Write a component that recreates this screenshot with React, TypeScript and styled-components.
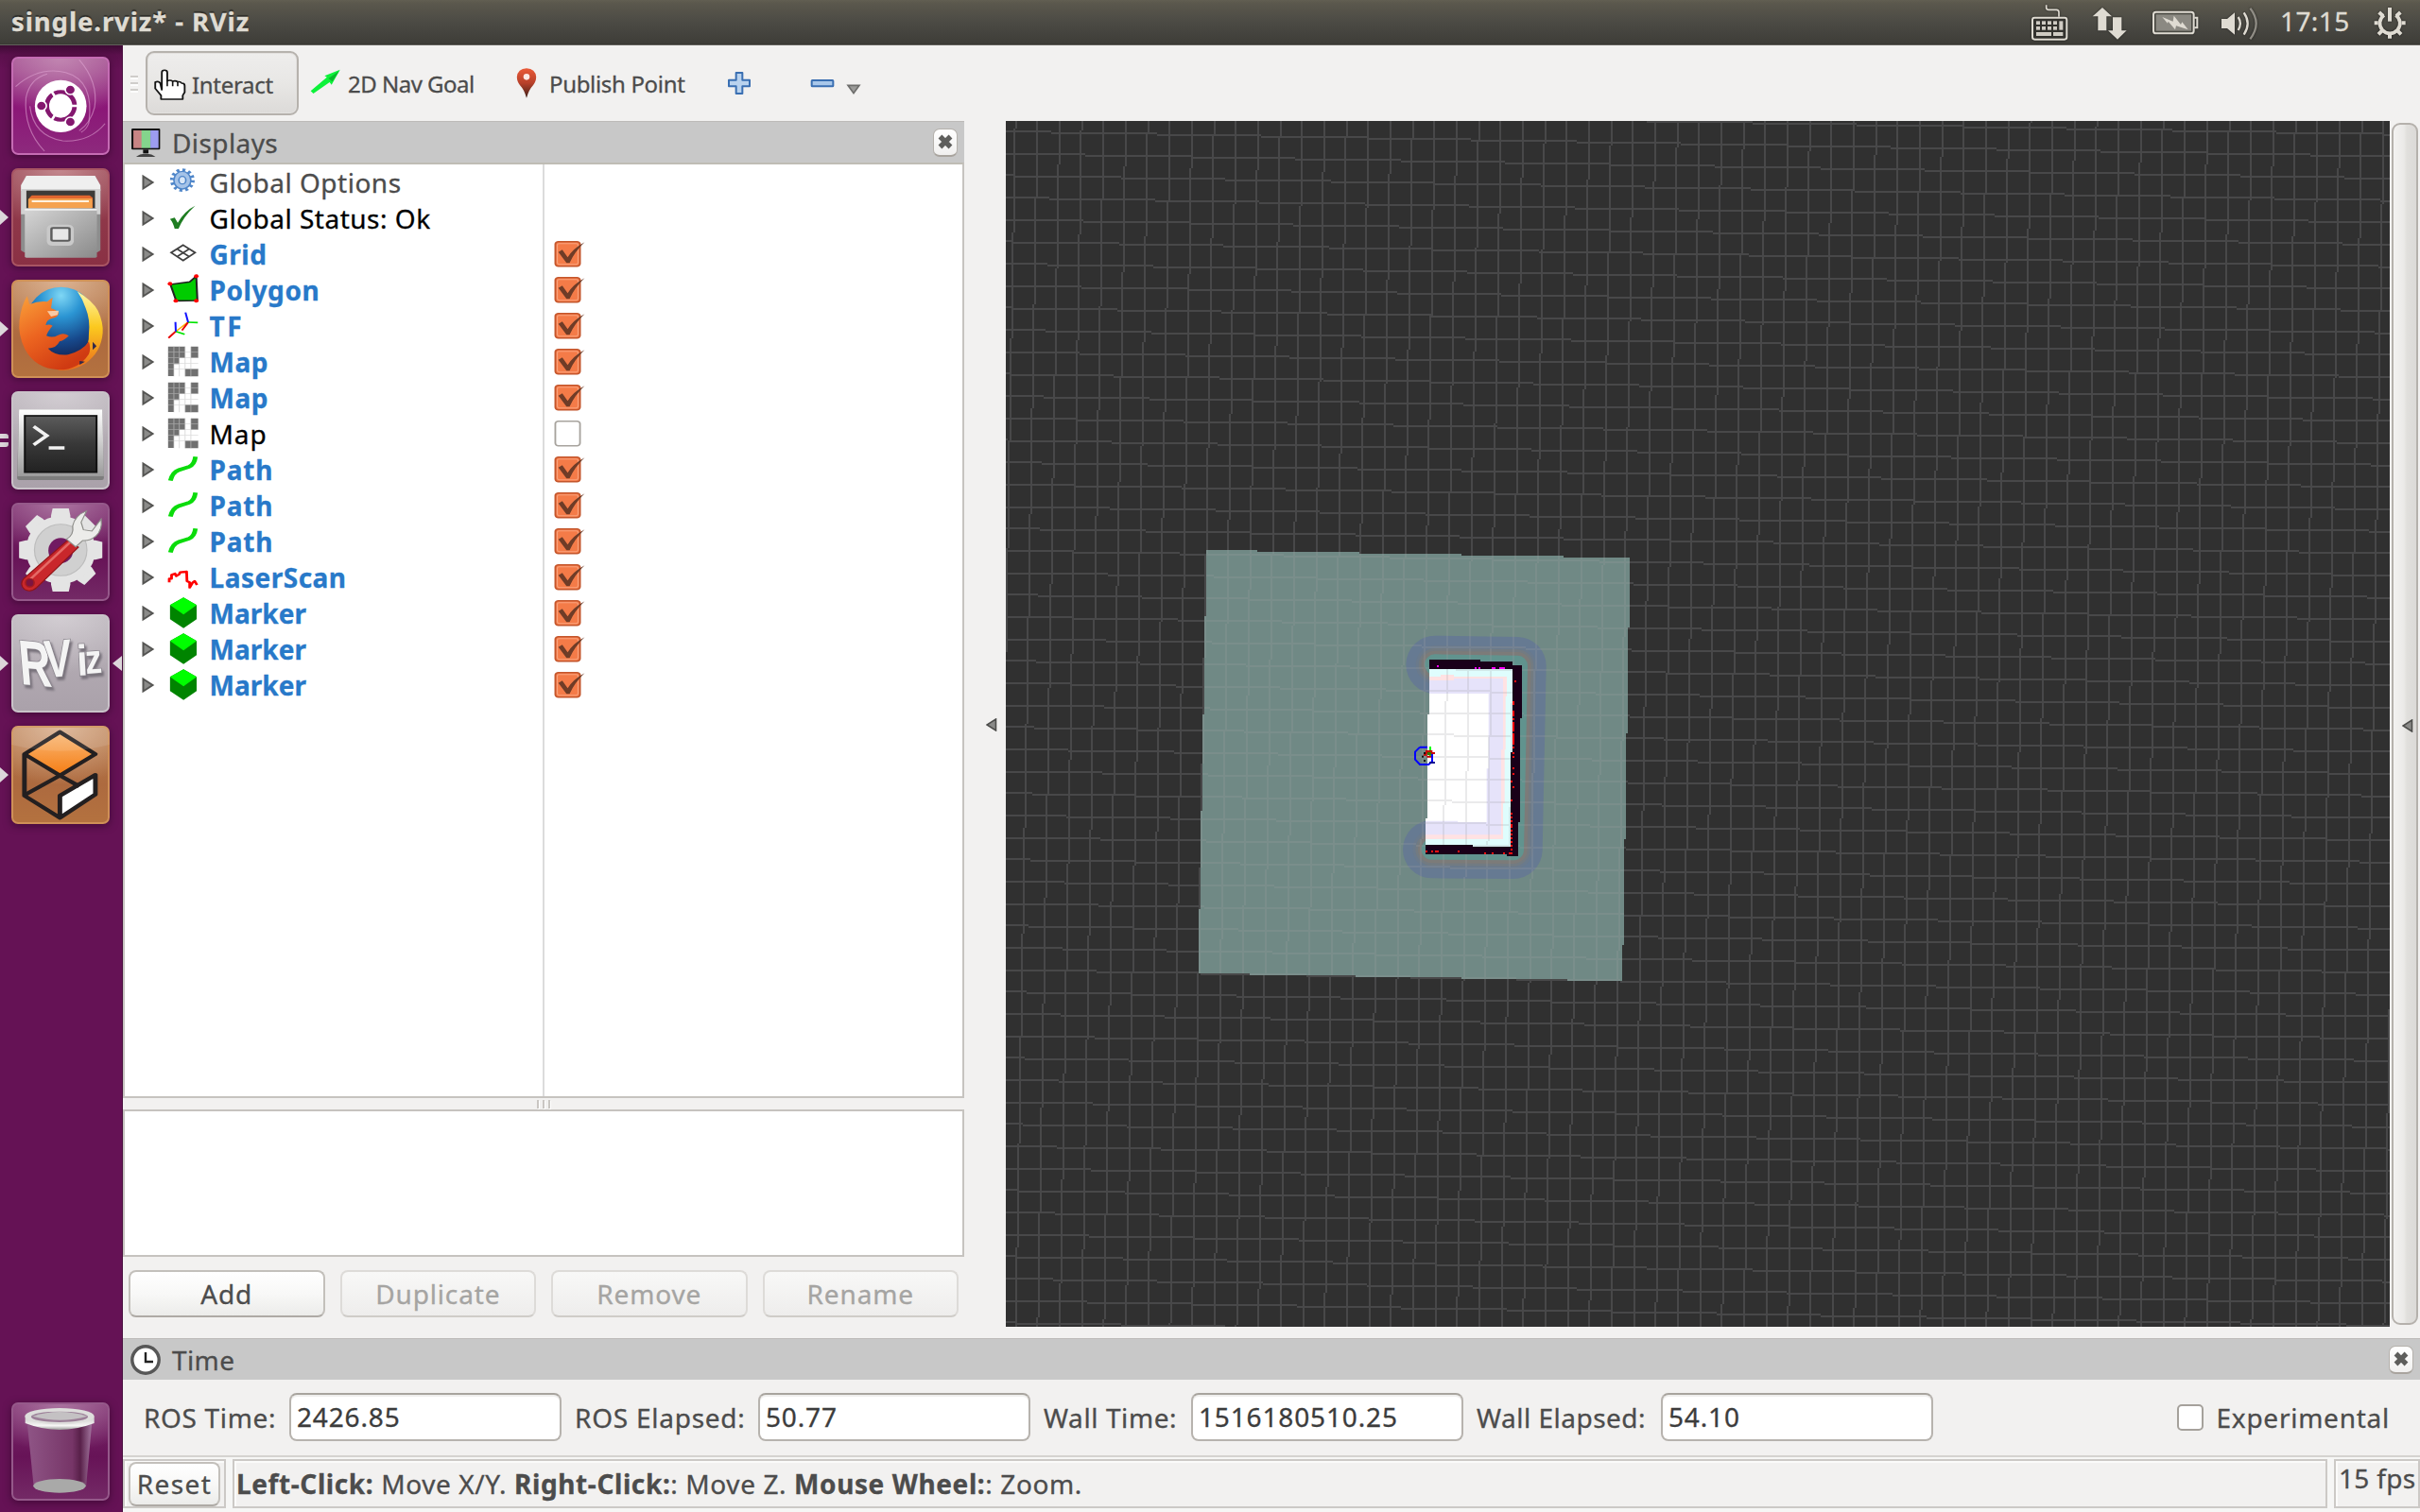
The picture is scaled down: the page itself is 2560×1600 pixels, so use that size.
import React from 'react';
import styled, { createGlobalStyle, css } from 'styled-components';

/* ------------------------------------------------------------------ */
/* Base                                                                */
/* ------------------------------------------------------------------ */

const GlobalStyle = createGlobalStyle`
  * { box-sizing: border-box; }
  html, body { margin: 0; padding: 0; overflow: hidden; }
  body {
    width: 2560px;
    height: 1600px;
    font-family: 'Noto Sans', 'Open Sans', sans-serif;
    font-size: 28px;
    color: #4c4c4c;
    background: #f2f1f0;
    -webkit-text-stroke: 0.3px;
  }
  svg { display: block; flex: none; }
`;

const Screen = styled.div`
  display: flex;
  flex-direction: column;
  width: 2560px;
  height: 1600px;
  overflow: hidden;
`;

const Body = styled.div`
  display: flex;
  flex: 1;
  min-height: 0;
`;

const Text = styled.span<{ $ls?: number }>`
  white-space: pre;
  letter-spacing: ${(p) => p.$ls ?? 0.6}px;
`;

const Spacer = styled.span<{ $w: number }>`
  flex: none;
  width: ${(p) => p.$w}px;
`;

/* ------------------------------------------------------------------ */
/* Top panel                                                           */
/* ------------------------------------------------------------------ */

const TopPanel = styled.header`
  display: flex;
  align-items: center;
  height: 48px;
  flex: none;
  padding-left: 12px;
  background: linear-gradient(#625f52 0, #5b584d 3px, #4b4a44 24px, #3e3d38 46px, #35342f 47px, #8f8d88 48px);
  color: #dfdbd2;
`;

const WindowTitle = styled.h1`
  margin: 0 auto 0 0;
  padding-bottom: 3px;
  font-size: 27.5px;
  font-weight: 700;
  line-height: 45px;
  letter-spacing: 0.9px;
  white-space: pre;
  text-shadow: 0 -2px 1px rgba(0, 0, 0, 0.45);
`;

const Indicators = styled.div`
  display: flex;
  align-items: center;
  height: 48px;
`;

const Clock = styled.span`
  width: 96px;
  padding-left: 20px;
  padding-bottom: 3px;
  line-height: 45px;
  letter-spacing: 0.4px;
`;

const IndicatorIcon = styled.svg`
  height: 48px;
  filter: drop-shadow(0 0 1px rgba(0, 0, 0, 0.6));
`;

const KeyboardIcon = () => (
  <IndicatorIcon width="40" viewBox="84 0 120 144">
    <path d="M134 16v8q0 7 8 7h24q8 0 8 8v14" fill="none" stroke="#dfdbd2" strokeWidth="5" />
    <rect x="90" y="56" width="109" height="69" rx="7" fill="#33322e" stroke="#dfdbd2" strokeWidth="6" />
    <g fill="#cfcbc3">
      {[102, 120, 138, 156].map((x) => (
        <React.Fragment key={x}>
          <rect x={x} y="67" width="12" height="11" />
          <rect x={x} y="84" width="12" height="11" />
        </React.Fragment>
      ))}
      <rect x="175" y="67" width="12" height="28" />
      <rect x="102" y="102" width="48" height="12" />
      <rect x="156" y="102" width="31" height="12" />
    </g>
  </IndicatorIcon>
);

const NetworkIcon = () => (
  <IndicatorIcon width="40" viewBox="277 0 120 144">
    <path fill="#dfdbd2" d="M313 24l30 28h-17v45h-27V52h-17zM346 55h28v42h16l-29 28-30-28h15z" />
  </IndicatorIcon>
);

const BatteryIcon = () => (
  <IndicatorIcon width="52" viewBox="470 0 156 144">
    <rect x="476" y="38" width="128" height="68" rx="8" fill="#4a4943" stroke="#dfdbd2" strokeWidth="6" />
    <rect x="484" y="46" width="112" height="52" fill="#8b8982" />
    <path d="M606 56h9v32h-9" fill="none" stroke="#dfdbd2" strokeWidth="6" />
    <path fill="#dfdbd2" d="M504 54l34 14 3-18 22 28 4-8 19 24-38-12-3 12-22-26-2 6z" />
  </IndicatorIcon>
);

const VolumeIcon = () => (
  <IndicatorIcon width="44" viewBox="684 0 132 144">
    <path fill="#dfdbd2" d="M690 60h18l24-20v70l-24-20h-18z" />
    <path d="M743 54q13 20 0 42" fill="none" stroke="#dfdbd2" strokeWidth="7" />
    <path d="M761 40q24 34 0 70" fill="none" stroke="#dfdbd2" strokeWidth="7" />
    <path d="M781 26q38 48 0 98" fill="none" stroke="#8f8c84" strokeWidth="7" />
  </IndicatorIcon>
);

const SessionIcon = () => (
  <IndicatorIcon width="40" viewBox="1164 0 120 144">
    <path d="M1206 48a32 32 0 1 0 37 0" fill="none" stroke="#dfdbd2" strokeWidth="11" />
    <path
      d="M1187 73h-12M1262 73h12M1224 110v12M1199 98l-11 11M1249 98l11 11M1203 51l-13-12M1245 51l13-12"
      stroke="#dfdbd2"
      strokeWidth="12"
    />
    <path d="M1224 24v44" stroke="#dfdbd2" strokeWidth="12" />
  </IndicatorIcon>
);

/* ------------------------------------------------------------------ */
/* Launcher                                                            */
/* ------------------------------------------------------------------ */

const Launcher = styled.nav`
  display: flex;
  flex-direction: column;
  gap: 14px;
  width: 130px;
  flex: none;
  padding: 12px 0;
  background: linear-gradient(#3d0a33 0, #5b104c 10px, #651255 26px);
  border-right: 1px solid #4a1040;
`;

type Tone = 'purple' | 'red' | 'tan' | 'grey' | 'clear';

const tones: Record<Tone, string> = {
  purple: 'radial-gradient(ellipse 90% 60% at 50% 0, #c287b2, transparent), linear-gradient(#a04a8d, #8b1677 50%, #8d2a7d)',
  red: 'radial-gradient(ellipse 90% 60% at 50% 0, #c4898f, transparent), linear-gradient(#94404f, #8a3044)',
  tan: 'radial-gradient(ellipse 90% 60% at 50% 0, #dcb393, transparent), linear-gradient(#b57a4d, #ad6a3f 60%, #b4723f)',
  grey: 'radial-gradient(ellipse 90% 60% at 50% 0, #d3ced3, transparent), linear-gradient(#b8b1b8, #aaa1aa)',
  clear: 'radial-gradient(ellipse 90% 50% at 50% 0, #ab74a0, transparent), linear-gradient(#7b2a6c, #671357 55%, #742a66)',
};

const outlines: Record<Tone, string> = {
  purple: '#c56cb4',
  red: '#a85563',
  tan: '#cf9057',
  grey: '#c9c3c9',
  clear: '#95598a',
};

const LauncherItem = styled.div<{ $last?: boolean }>`
  display: grid;
  grid-template-columns: 12px 104px 13px;
  align-items: center;
  height: 104px;
  ${(p) => p.$last && css`margin-top: auto;`}
`;

const Tile = styled.div<{ $tone: Tone }>`
  width: 104px;
  height: 104px;
  overflow: hidden;
  border-radius: 7px;
  background: ${(p) => tones[p.$tone]};
  box-shadow: inset 0 0 0 2px ${(p) => outlines[p.$tone]}, 0 2px 8px rgba(30, 0, 25, 0.5);
`;

const Pip = styled.span<{ $kind?: 'one' | 'two' | 'active' }>`
  height: 16px;
  ${(p) =>
    p.$kind === 'one' &&
    css`
      width: 9px;
      background: #dcd6da;
      clip-path: polygon(0 0, 100% 50%, 0 100%);
    `}
  ${(p) =>
    p.$kind === 'two' &&
    css`
      width: 9px;
      height: 14px;
      border: solid #dcd6da;
      border-width: 5px 0;
      border-radius: 0 3px 3px 0;
    `}
  ${(p) =>
    p.$kind === 'active' &&
    css`
      width: 10px;
      margin-left: 3px;
      background: #dcd6da;
      clip-path: polygon(100% 0, 0 50%, 100% 100%);
    `}
`;

/* Tile art uses a 255 x 312 canvas stretched onto the square tile. */
const TileArt = ({ top, children }: { top: number; children: React.ReactNode }) => (
  <svg width="104" height="104" viewBox={`29 ${top} 255 312`} preserveAspectRatio="none">
    {children}
  </svg>
);

const DashArt = () => (
  <TileArt top={180}>
    <g fill="none" stroke="#e2a8d6" strokeOpacity=".55" strokeWidth="3">
      <path d="M40 275q60-65 130-45q75 25 60 160q-5 20-20 30" />
      <path d="M205 190q50 70 40 150q-10 50-40 75" />
      <path d="M115 480q-55-70-48-170q10-60 55-75" />
      <path d="M272 392q-40 60-110 55q-75-15-85-110" />
    </g>
    <ellipse cx="157" cy="337" rx="67" ry="83" fill="#fff" />
    <ellipse cx="157" cy="336" rx="36" ry="44" fill="none" stroke="#84186f" strokeWidth="12" />
    <g stroke="#fff" strokeWidth="7">
      <path d="M157 336l62 0M157 336l-32-62M157 336l-32 62" />
    </g>
    <ellipse cx="157" cy="336" rx="27" ry="34" fill="#fff" />
    <g fill="#84186f" stroke="#fff" strokeWidth="4">
      <ellipse cx="107" cy="336" rx="13" ry="15" />
      <ellipse cx="182" cy="285" rx="13" ry="15" />
      <ellipse cx="182" cy="387" rx="13" ry="15" />
    </g>
  </TileArt>
);

const FilesArt = () => (
  <TileArt top={534}>
    <defs>
      <linearGradient id="cab" x1="0" y1="0" x2="1" y2="1">
        <stop offset="0" stopColor="#d6d6d6" />
        <stop offset="1" stopColor="#8a8a8a" />
      </linearGradient>
    </defs>
    <path d="M54 590l14-32h178l14 32v205l-8 6H62l-8-6z" fill="#8d8d8d" />
    <path d="M54 588l14-30h178l14 30v18H54z" fill="#efefef" />
    <path d="M54 600h206v80H54z" fill="#d2d2d2" />
    <rect x="68" y="605" width="178" height="60" fill="#3e3b38" />
    <path d="M76 628l6-8h150l8 8v32H76z" fill="#e0662e" />
    <rect x="73" y="630" width="166" height="32" rx="3" fill="#f5a24f" />
    <rect x="82" y="636" width="148" height="6" fill="#fff2df" />
    <rect x="64" y="661" width="187" height="157" rx="4" fill="url(#cab)" />
    <path d="M64 663h187v5H64z" fill="#efefef" />
    <rect x="121" y="713" width="70" height="67" rx="14" fill="#c9c9c9" />
    <rect x="133" y="724" width="47" height="40" rx="4" fill="#e8e8e8" stroke="#5c5c5c" strokeWidth="6" />
  </TileArt>
);

const FirefoxArt = () => (
  <TileArt top={888}>
    <defs>
      <radialGradient id="globe" cx=".5" cy=".12" r=".85">
        <stop offset="0" stopColor="#7fd7f5" />
        <stop offset=".35" stopColor="#2b95d3" />
        <stop offset=".75" stopColor="#17498c" />
        <stop offset="1" stopColor="#132a5e" />
      </radialGradient>
      <linearGradient id="fox" x1="0" y1="0" x2=".6" y2="1">
        <stop offset="0" stopColor="#f9a13a" />
        <stop offset=".5" stopColor="#ec6420" />
        <stop offset="1" stopColor="#cf3a12" />
      </linearGradient>
      <linearGradient id="tail" x1="0" y1="0" x2="0" y2="1">
        <stop offset="0" stopColor="#fff6a8" />
        <stop offset=".45" stopColor="#fbc91f" />
        <stop offset="1" stopColor="#ea6a1c" />
      </linearGradient>
    </defs>
    <ellipse cx="158" cy="1025" rx="91" ry="114" fill="url(#globe)" />
    <path
      d="M200 925q40 30 54 62q14 38 12 70q-4 62-46 98q-36 26-70 20q32-34 60-54q22-22 20-62q4-44-8-80q-8-30-22-54z"
      fill="url(#tail)"
    />
    <path
      d="M70 940l6 26q26-12 46-8l14-14l-4 34q14 6 20 14q0 14-16 18q-16 4-18 22q10-4 18 2q-14 20-16 32q16 8 30-2q14-10 28 2q-10 14-24 18q-8 22-30 22q18 24 52 20q38-12 54-42q6 24 0 40q-26 50-78 50q-62-4-88-66q-18-44-14-90q4-46 20-78z"
      fill="url(#fox)"
    />
    <path d="M122 988l30-2-3 14-17 5z" fill="#f7c9a4" />
    <path d="M240 1085l10 14-10 12zM206 1146l14 2-14 10z" fill="#30284a" />
  </TileArt>
);

const TerminalArt = () => (
  <TileArt top={42}>
    <defs>
      <linearGradient id="term" x1="0" y1="0" x2="0" y2="1">
        <stop offset="0" stopColor="#5c5c5c" />
        <stop offset=".5" stopColor="#383838" />
        <stop offset="1" stopColor="#222" />
      </linearGradient>
      <linearGradient id="termEdge" x1="0" y1="0" x2="0" y2="1">
        <stop offset="0" stopColor="#fff" />
        <stop offset="1" stopColor="#9b9b9b" />
      </linearGradient>
    </defs>
    <path d="M49 100h216l4 218q0 6-6 6H50q-6 0-6-6z" fill="#7d7d7d" />
    <path d="M49 100h216l4 212H45z" fill="url(#termEdge)" />
    <rect x="64" y="120" width="186" height="179" fill="url(#term)" stroke="#111" strokeWidth="5" />
    <path d="M87 154l34 29-34 29" fill="none" stroke="#f2f2f2" strokeWidth="10" />
    <path d="M126 222h41" stroke="#f2f2f2" strokeWidth="11" />
  </TileArt>
);

const SettingsArt = () => (
  <TileArt top={396}>
    <g fill="#e4e4e4">
      {[0, 45, 90, 135].map((a) => (
        <g key={a} transform={`translate(157 546) scale(1 1.22) rotate(${a})`}>
          <path d="M-25-90l4-18h42l4 18v180l-4 18h-42l-4-18z" />
        </g>
      ))}
      <ellipse cx="157" cy="546" rx="90" ry="108" />
    </g>
    <ellipse cx="157" cy="546" rx="68" ry="82" fill="#d0d0d0" stroke="#bdbdbd" strokeWidth="3" />
    <ellipse cx="157" cy="548" rx="32" ry="40" fill="#711b62" />
    <path d="M175 515l28 22-108 128q-16 18-32 6q-14-16-2-34z" fill="#c9272b" stroke="#8f1418" strokeWidth="3" />
    <path d="M183 520L72 646" stroke="#e56a66" strokeWidth="7" />
    <path
      d="M172 512q20-14 16-42q6-34 36-48l-14 36l6 24l22 4l24-38q4 34-14 54q-16 16-34 14l-18 20z"
      fill="#ececea"
      stroke="#8e8e8a"
      strokeWidth="3"
    />
    <ellipse cx="77" cy="650" rx="11" ry="13" fill="#7d1440" stroke="#a01c20" strokeWidth="4" />
  </TileArt>
);

const LogoText = styled.text`
  font-family: 'Liberation Sans', Arial, sans-serif;
  font-weight: 700;
  fill: #f4f4f4;
  stroke: #87828a;
  stroke-width: 1.6px;
  paint-order: stroke;
`;

const RvizArt = () => (
  <svg width="104" height="104" viewBox="0 0 104 104">
    <g filter="drop-shadow(2px 3px 1px #77717a)">
      <LogoText transform="translate(10 74) skewY(5) skewX(5) scale(.7 1)" fontSize="67">R</LogoText>
      <LogoText transform="translate(36 67) rotate(-4) scale(.78 1)" fontSize="56">V</LogoText>
      <LogoText transform="translate(70 65) rotate(-3) scale(.9 1)" fontSize="46">i</LogoText>
      <LogoText transform="translate(79 63) rotate(-4) scale(.8 1)" fontSize="44">z</LogoText>
    </g>
  </svg>
);

const GazeboArt = () => (
  <TileArt top={1104}>
    <defs>
      <linearGradient id="gz" x1="0" y1="0" x2="0" y2="1">
        <stop offset="0" stopColor="#f9b978" />
        <stop offset="1" stopColor="#f57c12" />
      </linearGradient>
    </defs>
    <path d="M155 1124l92 70-92 68-92-68z" fill="url(#gz)" />
    <path d="M156 1328l92-66v60l-92 74z" fill="#fff" />
    <g fill="none" stroke="#231f20" strokeWidth="12" strokeLinejoin="round">
      <path d="M155 1124l92 70-92 68-92-68zM63 1194v132l92 70v-70l92-66v62l-92 74" />
      <path d="M63 1324l92-62 50 34" />
    </g>
    <path d="M29 1104h255v60q-127 40-255 0z" fill="#fff" opacity=".1" />
  </TileArt>
);

const TrashArt = () => (
  <TileArt top={1032}>
    <defs>
      <linearGradient id="bin" x1="0" y1="0" x2="1" y2="0">
        <stop offset="0" stopColor="#8f5586" />
        <stop offset=".7" stopColor="#763567" />
        <stop offset=".82" stopColor="#582049" />
        <stop offset="1" stopColor="#a477a0" />
      </linearGradient>
      <linearGradient id="rim" x1="0" y1="0" x2="0" y2="1">
        <stop offset="0" stopColor="#c9c9c7" />
        <stop offset=".7" stopColor="#f6f6f5" />
        <stop offset="1" stopColor="#9a9a98" />
      </linearGradient>
    </defs>
    <path d="M70 1096l17 202q68 34 136 0l15-202z" fill="url(#bin)" />
    <ellipse cx="154" cy="1297" rx="68" ry="22" fill="#a9a9a8" />
    <path d="M65 1076v22q89 42 179 0v-22z" fill="url(#rim)" />
    <ellipse cx="154" cy="1076" rx="90" ry="26" fill="#dededc" />
    <ellipse cx="154" cy="1078" rx="74" ry="17" fill="#9c7f98" />
    <path d="M84 1076q70-28 142 0q-70 24-142 0z" fill="#c4c1c3" />
  </TileArt>
);

const launcherItems: { tone: Tone; art: React.FC; pip?: 'one' | 'two'; active?: boolean; last?: boolean }[] = [
  { tone: 'purple', art: DashArt },
  { tone: 'red', art: FilesArt, pip: 'one' },
  { tone: 'tan', art: FirefoxArt, pip: 'one' },
  { tone: 'grey', art: TerminalArt, pip: 'two' },
  { tone: 'clear', art: SettingsArt },
  { tone: 'grey', art: RvizArt, pip: 'one', active: true },
  { tone: 'tan', art: GazeboArt, pip: 'one' },
  { tone: 'clear', art: TrashArt, last: true },
];

/* ------------------------------------------------------------------ */
/* Toolbar                                                             */
/* ------------------------------------------------------------------ */

const Main = styled.main`
  display: flex;
  flex-direction: column;
  flex: 1;
  min-width: 0;
  background: #f2f1f0;
`;

const ToolBar = styled.div`
  display: flex;
  align-items: center;
  height: 80px;
  flex: none;
  padding-left: 8px;
  font-size: 24px;
`;

const Grip = styled.span`
  width: 8px;
  height: 18px;
  margin-right: 8px;
  margin-top: 2px;
  background: repeating-linear-gradient(#cfcdca 0 2px, #fdfdfd 2px 4px, transparent 4px 7px);
`;

const ToolButton = styled.div<{ $width: number; $active?: boolean }>`
  display: flex;
  align-items: center;
  width: ${(p) => p.$width}px;
  height: 68px;
  ${(p) =>
    p.$active &&
    css`
      padding: 3px 0 0 7px;
      border: 2px solid #b6b2ad;
      border-radius: 9px;
      background: linear-gradient(#eeedec, #e8e7e5 50%, #dcdad8);
      box-shadow: inset 0 0 0 1px #e3e1df;
    `}
`;

const HandIcon = () => (
  <svg width="34" height="34" viewBox="399 220 83 102" preserveAspectRatio="none">
    <path
      d="M419 286V231q0-7 7-7t7 7v27q8-4 14 1q8-3 13 2q7-2 10 4q8 0 8 8v21l-5 10v12h-56v-12l-15-22v-20q8-5 13 3z"
      fill="#fff"
      stroke="#151515"
      strokeWidth="4.6"
      strokeLinejoin="round"
    />
    <path d="M433 256v19M447 259v16M460 262v13" stroke="#151515" strokeWidth="4" />
  </svg>
);

const NavGoalIcon = () => (
  <svg width="36" height="30" viewBox="802 222 88 90" preserveAspectRatio="none">
    <path d="M806 292l42-44-6-4 40-20-22 48-5-8-42 36z" fill="#0df23a" />
    <path d="M852 252l10 10 18-34z" fill="#0ab92c" />
  </svg>
);

const PinIcon = () => (
  <svg width="22" height="32" viewBox="1340 215 54 96" preserveAspectRatio="none">
    <defs>
      <linearGradient id="pin" x1="0" y1="0" x2="0" y2="1">
        <stop offset="0" stopColor="#ea5a38" />
        <stop offset=".5" stopColor="#b7402a" />
        <stop offset="1" stopColor="#3d1f18" />
      </linearGradient>
    </defs>
    <path d="M1367 310q-6-26-17-40q-8-12-8-27q2-25 25-27q23 2 25 27q0 15-8 27q-11 14-17 40z" fill="url(#pin)" />
    <ellipse cx="1367" cy="243" rx="8" ry="10" fill="#fbe9e4" />
  </svg>
);

const PlusIcon = () => (
  <svg width="26" height="26" viewBox="387 225 78 78">
    <path
      d="M416 231h20v23h23v20h-23v23h-20v-23h-23v-20h23z"
      fill="#b9d2ee"
      stroke="#3a6fb2"
      strokeWidth="6"
      strokeLinejoin="round"
    />
  </svg>
);

const MinusIcon = () => (
  <svg width="26" height="26" viewBox="651 225 78 78">
    <rect x="656" y="255" width="68" height="19" rx="2" fill="#a9c7ea" stroke="#3a6fb2" strokeWidth="6" />
  </svg>
);

const DropIcon = () => (
  <svg width="16" height="26" viewBox="765 225 48 78">
    <path d="M771 271h36l-18 25z" fill="#9b9b99" stroke="#6e6e6c" strokeWidth="5" />
  </svg>
);

/* ------------------------------------------------------------------ */
/* Panels                                                              */
/* ------------------------------------------------------------------ */

const PanelHeader = styled.div`
  display: flex;
  align-items: center;
  height: 44px;
  flex: none;
  padding: 0 7px;
  background: #c8c8c8;
  border-top: 1px solid #bcbab8;
`;

const PanelTitle = styled.h2`
  margin: 0 auto 0 11px;
  font-size: 28px;
  font-weight: 400;
  line-height: 42px;
  letter-spacing: 0.4px;
`;

const CloseBox = styled.button`
  display: grid;
  place-items: center;
  width: 26px;
  height: 30px;
  padding: 0;
  border: 1px solid #b5b1ac;
  border-bottom: 2px solid #a9a49e;
  border-radius: 7px;
  background: linear-gradient(#fff, #f1f0ef);
`;

const CloseButton = () => (
  <CloseBox aria-label="Close">
    <svg width="16" height="16" viewBox="0 0 16 16">
      <path d="M2.5 2.5l11 11M13.5 2.5l-11 11" stroke="#5e5e5c" strokeWidth="5.4" />
    </svg>
  </CloseBox>
);

const MonitorIcon = () => (
  <svg width="34" height="34" viewBox="335 404 83 102" preserveAspectRatio="none">
    <rect x="340" y="410" width="74" height="67" rx="3" fill="#111" />
    <rect x="345" y="416" width="22" height="56" fill="#c88484" />
    <rect x="366" y="416" width="24" height="56" fill="#84d48c" />
    <rect x="389" y="416" width="21" height="56" fill="#9c9cf0" />
    <path d="M370 477h14v12h-14z" fill="#111" />
    <path d="M352 500q8-10 25-10t25 10z" fill="#444" />
  </svg>
);

const ClockIcon = () => (
  <svg width="34" height="34" viewBox="0 0 34 34">
    <circle cx="17" cy="17" r="14.2" fill="#fff" stroke="#575757" strokeWidth="3.4" />
    <path d="M17 9v10h8" fill="none" stroke="#222" strokeWidth="2.4" />
  </svg>
);

const Workspace = styled.section`
  display: flex;
  height: 1288px;
  flex: none;
`;

const DisplaysPanel = styled.aside`
  display: flex;
  flex-direction: column;
  width: 890px;
  flex: none;
`;

const Tree = styled.ul`
  display: flex;
  flex-direction: column;
  height: 990px;
  flex: none;
  margin: 0;
  padding: 0;
  list-style: none;
  border: 2px solid #c6c3bf;
  border-top-color: #bfbcb4;
  background: linear-gradient(90deg, #fff 442px, #dcdcdc 442px 444px, #fff 444px);
`;

const TreeRow = styled.li`
  display: grid;
  grid-template-columns: 27px 44.5px 363px 34px;
  align-items: center;
  height: 38px;
  flex: none;
  padding-left: 18px;
`;

const RowName = styled.span<{ $state: 'muted' | 'plain' | 'on'; $ls?: number }>`
  color: ${(p) => (p.$state === 'on' ? '#2879c9' : p.$state === 'plain' ? '#000' : '#4c4c4c')};
  font-weight: ${(p) => (p.$state === 'on' ? 700 : 400)};
  line-height: 38px;
  letter-spacing: ${(p) => p.$ls ?? 0.5}px;
  white-space: pre;
`;

const ExpandIcon = () => (
  <svg width="14" height="18" viewBox="0 0 14 18">
    <path d="M1.5 2.5l10 6.5-10 6.5z" fill="#8b8b89" stroke="#555553" strokeWidth="2" />
  </svg>
);

const RowIcon = ({ cy, children }: { cy: number; children: React.ReactNode }) => (
  <svg width="34" height="34" viewBox={`434 ${cy - 51} 83.3 102`} preserveAspectRatio="none">
    {children}
  </svg>
);

const OptionsIcon = () => (
  <RowIcon cy={580}>
    <ellipse cx="473" cy="573" rx="27" ry="32" fill="none" stroke="#4f86c9" strokeWidth="10" strokeDasharray="7.5 7.9" />
    <ellipse cx="473" cy="573" rx="22" ry="28" fill="#a5c3e8" stroke="#4f86c9" strokeWidth="4" />
    <ellipse cx="473" cy="573" rx="9" ry="12" fill="#dbe8f7" stroke="#4f86c9" strokeWidth="4" />
  </RowIcon>
);

const OkIcon = () => (
  <RowIcon cy={691}>
    <path d="M441 693l12-4 8 16q18-38 45-54q-30 34-43 73h-10q-4-20-12-31z" fill="#1f7d22" />
  </RowIcon>
);

const GridIcon = () => (
  <RowIcon cy={806}>
    <path
      d="M475 777l31 24-31 25-31-25zM459 789l32 25M491 789l-32 25"
      fill="none"
      stroke="#3f3f3f"
      strokeWidth="5"
    />
  </RowIcon>
);

const PolygonIcon = () => (
  <RowIcon cy={920}>
    <path d="M442 902l50-8 17-18 3 77-55 1z" fill="#0c0" stroke="#222" strokeWidth="5" />
    <g fill="#f00">
      <ellipse cx="441" cy="900" rx="6" ry="6" />
      <ellipse cx="509" cy="876" rx="6" ry="6" />
      <ellipse cx="509" cy="954" rx="6" ry="6" />
      <ellipse cx="456" cy="954" rx="6" ry="6" />
    </g>
  </RowIcon>
);

const TfIcon = () => (
  <RowIcon cy={1034}>
    <path d="M456 1051l32-30" stroke="#ffb000" strokeWidth="4" />
    <path d="M456 1051l-19 21M488 1022l-16 26" stroke="#e80000" strokeWidth="5" />
    <path d="M456 1051l23 9M488 1022l25 1" stroke="#00e400" strokeWidth="5" />
    <path d="M456 1051l-1-30M488 1022l-7-31" stroke="#1414ff" strokeWidth="5" />
  </RowIcon>
);

const MapIcon = () => (
  <RowIcon cy={1148}>
    <path d="M436 1099h44v36h-15v20h-14v38h-15zM495 1099h19v36h-19zM480 1170h34v24h-34z" fill="#707070" />
    <path
      d="M451 1099v95M465 1099v95M480 1099v95M495 1099v95M436 1117h78M436 1135h78M436 1153h78M436 1171h78"
      stroke="#c6c6c6"
      strokeOpacity=".6"
      strokeWidth="2.5"
    />
  </RowIcon>
);

const PathIcon = () => (
  <RowIcon cy={290}>
    <path d="M442 325q6-28 22-34t26-10q14-6 17-32" fill="none" stroke="#0bdc0b" strokeWidth="12" />
  </RowIcon>
);

const LaserIcon = () => (
  <RowIcon cy={632}>
    <path
      d="M439 648v-12h6v-12l9-4 3 8 8-6 2-6 17-2 1 30 7 4v16l8-16 5-4 6 12"
      fill="none"
      stroke="#f00"
      strokeWidth="7"
      strokeLinejoin="round"
    />
  </RowIcon>
);

const MarkerIcon = () => (
  <RowIcon cy={746}>
    <path d="M441 720l35-24 34 24v45l-34 28-35-28z" fill="#008400" />
    <path d="M441 720l35-24 34 24-34 30z" fill="#0f0" />
  </RowIcon>
);

const TreeCheck = ({ checked }: { checked: boolean }) => (
  <svg width="34" height="34" viewBox="1432 754 83.3 102" preserveAspectRatio="none">
    <rect
      x="1438"
      y="765"
      width="64"
      height="78"
      rx="8"
      fill={checked ? '#f47b48' : '#fff'}
      stroke={checked ? '#c4562c' : '#a7a39d'}
      strokeWidth="4.5"
    />
    {checked && (
      <>
        <rect x="1443" y="771" width="54" height="66" rx="5" fill="none" stroke="#f9a27c" strokeWidth="3" />
        <path d="M1446 798l10-7 14 24q14-28 44-48q-26 30-39 66h-8z" fill="#6f3c27" />
      </>
    )}
  </svg>
);

type RowSpec = { name: string; icon: React.FC; state: 'muted' | 'plain' | 'on'; check?: boolean; ls?: number };

const rows: RowSpec[] = [
  { name: 'Global Options', icon: OptionsIcon, state: 'muted' },
  { name: 'Global Status: Ok', icon: OkIcon, state: 'plain' },
  { name: 'Grid', icon: GridIcon, state: 'on', check: true },
  { name: 'Polygon', icon: PolygonIcon, state: 'on', check: true, ls: 0.6 },
  { name: 'TF', icon: TfIcon, state: 'on', check: true, ls: 2.5 },
  { name: 'Map', icon: MapIcon, state: 'on', check: true },
  { name: 'Map', icon: MapIcon, state: 'on', check: true },
  { name: 'Map', icon: MapIcon, state: 'plain', check: false, ls: 0.9 },
  { name: 'Path', icon: PathIcon, state: 'on', check: true, ls: 0.8 },
  { name: 'Path', icon: PathIcon, state: 'on', check: true, ls: 0.8 },
  { name: 'Path', icon: PathIcon, state: 'on', check: true, ls: 0.8 },
  { name: 'LaserScan', icon: LaserIcon, state: 'on', check: true },
  { name: 'Marker', icon: MarkerIcon, state: 'on', check: true, ls: 0.05 },
  { name: 'Marker', icon: MarkerIcon, state: 'on', check: true, ls: 0.05 },
  { name: 'Marker', icon: MarkerIcon, state: 'on', check: true, ls: 0.05 },
];

const SplitHandle = styled.div`
  display: flex;
  justify-content: center;
  align-items: center;
  gap: 4px;
  height: 12px;
  flex: none;
`;

const SplitTick = styled.span`
  width: 2px;
  height: 9px;
  background: #c9c6c2;
  box-shadow: 1px 1px 0 #fff;
`;

const Description = styled.div`
  height: 156px;
  flex: none;
  border: 2px solid #c6c3bf;
  background: #fff;
`;

const ButtonRow = styled.div`
  display: flex;
  gap: 16px;
  padding: 14px 6px 0;
`;

const PushButton = styled.button`
  flex: 1;
  height: 50px;
  padding: 0;
  border: 2px solid #c3c0bb;
  border-bottom-color: #aeaaa5;
  border-radius: 8px;
  background: linear-gradient(#fff, #f8f8f7 50%, #ececea);
  font: inherit;
  line-height: 44px;
  color: #4c4c4c;
  letter-spacing: 0.85px;

  &:disabled {
    border-color: #dddbd8;
    border-bottom-color: #cfccc8;
    background: linear-gradient(#f8f8f7, #eeedec);
    color: #a5a4a2;
  }
`;

/* ------------------------------------------------------------------ */
/* 3D view                                                             */
/* ------------------------------------------------------------------ */

const Splitter = styled.div`
  display: flex;
  align-items: center;
  justify-content: center;
  width: 44px;
  flex: none;
  padding: 0 0 10px 14px;
`;

const RightDock = styled.div`
  display: flex;
  width: 32px;
  flex: none;
  padding: 2px 2px 14px 2px;
`;

const DockBar = styled.div`
  display: flex;
  align-items: center;
  justify-content: center;
  flex: 1;
  padding: 4px 0 0 5px;
  border: 2px solid #b5b1ac;
  border-radius: 9px;
  background: linear-gradient(90deg, #f3f2f1, #ebeae8 45%, #e0dfdc 60%, #dcdad8);
`;

const CollapseArrow = () => (
  <svg width="12" height="14" viewBox="0 0 12 14">
    <path d="M10.5 1v12L1 7z" fill="#8a8a88" stroke="#4d4d4b" strokeWidth="1.6" />
  </svg>
);

const SLOPE = 0.01802;
const PITCH = 23.346;
const VIEW = { left: 1064, top: 128, right: 2528, bottom: 1404 };

/* Ground grid: every line is slightly tilted and stepped on 2px cells. */
function gridPath(): string {
  const out: string[] = [];
  for (let k = -3; k < 58; k++) {
    const at = (x: number) => 140 + k * PITCH + SLOPE * (x - 1111.7);
    let start = VIEW.left;
    let y = Math.floor(at(start) / 2) * 2 + 1;
    for (let x = VIEW.left; x <= VIEW.right; x += 2) {
      const ny = Math.floor(at(x) / 2) * 2 + 1;
      if (ny !== y || x === VIEW.right) {
        if (y > VIEW.top && y < VIEW.bottom) out.push(`M${start} ${y}H${x}`);
        start = x;
        y = ny;
      }
    }
  }
  for (let k = -1; k < 66; k++) {
    const at = (y: number) => 1073.8 + k * PITCH - SLOPE * (y - 145.7);
    let start = VIEW.top;
    let x = Math.floor(at(start) / 2) * 2 + 1;
    for (let y = VIEW.top; y <= VIEW.bottom; y += 2) {
      const nx = Math.floor(at(y) / 2) * 2 + 1;
      if (nx !== x || y === VIEW.bottom) {
        if (x > VIEW.left && x < VIEW.right) out.push(`M${x} ${start}V${y}`);
        start = y;
        x = nx;
      }
    }
  }
  return out.join('');
}

const CELL = 6;

/* Turns a polygon into a staircase outline on the map's cells. */
function cells(points: [number, number][]): string {
  const snap = (v: number) => Math.round(v / CELL) * CELL;
  let d = '';
  points.forEach(([ax, ay], i) => {
    const [bx, by] = points[(i + 1) % points.length];
    const n = Math.max(1, Math.round(Math.max(Math.abs(bx - ax), Math.abs(by - ay)) / CELL));
    for (let j = 0; j < n; j++) {
      const x = snap(ax + ((bx - ax) * j) / n);
      const y = snap(ay + ((by - ay) * j) / n);
      d += d ? `H${x}V${y}` : `M${x} ${y}`;
    }
  });
  return d + 'Z';
}

const wallLine = 'M834 430L1095 434L1083 1018L824 1016';

const inflation: [number, string][] = [
  [184, '#667a92'],
  [122, '#6a7a8c'],
  [104, '#727b82'],
  [88, '#7c7b79'],
  [66, '#61938e'],
];

const redCells: [number, number][] = [
  [1089, 483], [1083, 549], [1083, 555], [1083, 603], [1083, 693], [1083, 711], [1083, 723], [1083, 759], [1083, 777],
  [1077, 801], [1083, 819], [1077, 861], [1077, 903], [1077, 915], [1077, 927], [1077, 939], [1077, 945], [1077, 957],
  [1077, 969], [1077, 981], [1077, 993], [1077, 1005], [1077, 1017], [1077, 1029], [807, 1023], [825, 1023], [837, 1023],
  [843, 1023], [909, 1023], [993, 1029], [1017, 1029], [1053, 1029], [1071, 1029],
];

const magentaCells: [number, number][] = [
  [843, 435], [963, 441], [975, 441], [1017, 441], [1023, 441], [1041, 441], [1047, 441], [1053, 441],
];

const Dots = ({ at, fill }: { at: [number, number][]; fill: string }) => (
  <g fill={fill}>
    {at.map(([x, y]) => (
      <rect key={`${x}-${y}`} x={x - 3} y={y - 3} width="6" height="6" />
    ))}
  </g>
);

const Scene = styled.svg`
  background: #303030;
`;

const RenderView = () => (
  <Scene width="1464" height="1276" viewBox="1064 128 1464 1276">
    <g transform="translate(1240 560) scale(.333333)">
      <path d={cells([[109, 66], [1453, 91], [1429, 1434], [83, 1410]])} fill="#708985" />
      <g fill="none" strokeLinejoin="round" strokeLinecap="round">
        {inflation.map(([w, c]) => (
          <path key={w} d={wallLine} stroke={c} strokeWidth={w} />
        ))}
      </g>
      <path d="M816 444H1080V708H1074V1008H804V918H810V588H816Z" fill="#dffdfd" />
      <path d="M816 468H852V462H894V468H1062V530H1058V700H1055V870H1050V984H804V918H810V588H816Z" fill="#ffe2e3" />
      <path d="M816 480H894V474H1050V700H1044V970H804V918H810V588H816Z" fill="#e6e3fa" />
      <path d="M816 522H1004V760H998V930H906V926H804V918H810V588H816Z" fill="#fff" />
    </g>
    <path d={gridPath()} fill="none" stroke="#a0a0a4" strokeOpacity=".22" strokeWidth="2" />
    <g transform="translate(1240 560) scale(.333333)">
      <path
        d="M816 414H978V420H1080V432H1110V600H1104V930H1098V1038H1062V1032H804V1002H954V1008H1074V708H1080V444H816Z"
        fill="#190019"
      />
      <rect x="1080" y="576" width="6" height="18" fill="#f00" />
      <rect x="1080" y="612" width="6" height="30" fill="#f00" />
      <rect x="1080" y="648" width="6" height="36" fill="#f00" />
      <Dots at={redCells} fill="#ff1010" />
      <Dots at={magentaCells} fill="#f0f" />
      <path
        d="M786 692H810M786 692L771 707V731L786 747H814L825 737V712"
        fill="none"
        stroke="#00f"
        strokeWidth="6"
      />
      <path d="M816 738h18v6h-18z" fill="#0a0a90" />
      <path d="M816 690h6v30h-6z" fill="#0f0" />
      <path d="M804 702h22v6h8v6h-10v-1h-16v12h14v-6h-24v-11h6z" fill="#c80000" />
      <path d="M810 708h12v9h-12z" fill="#2f7a00" />
      <Dots at={[[795, 722], [801, 711], [801, 735]]} fill="#111" />
    </g>
  </Scene>
);

/* ------------------------------------------------------------------ */
/* Time panel and status bar                                           */
/* ------------------------------------------------------------------ */

const TimeRow = styled.div`
  display: flex;
  align-items: center;
  gap: 14px;
  height: 80px;
  flex: none;
  padding: 0 32px 0 22px;
`;

const Field = styled.label`
  display: flex;
  align-items: center;
`;

const FieldLabel = styled.span<{ $w: number; $ls: number }>`
  width: ${(p) => p.$w}px;
  line-height: 50px;
  letter-spacing: ${(p) => p.$ls}px;
  white-space: pre;
`;

const FieldBox = styled.output`
  width: 288px;
  height: 51px;
  margin-top: -1px;
  padding-left: 6px;
  border: 2px solid #b7b3ae;
  border-top-color: #a8a49e;
  border-radius: 8px;
  background: #fff;
  box-shadow: inset 0 2px 1px #efeeed;
  line-height: 46px;
  color: #3c3c3c;
  letter-spacing: 0.85px;
`;

const Experimental = styled.label`
  display: flex;
  align-items: center;
  gap: 14px;
  margin-left: auto;
`;

const CheckBox = styled.span`
  width: 28px;
  height: 28px;
  border: 2px solid #a5a19b;
  border-radius: 5px;
  background: #fff;
`;

const StatusBar = styled.footer`
  display: flex;
  gap: 7px;
  height: 60px;
  flex: none;
  border-top: 2px solid #d5d3d0;
  padding: 2px 0 4px;
  background: #f6f6f5;
`;

const StatusCell = styled.div<{ $w?: number; $raised?: boolean }>`
  display: flex;
  align-items: center;
  ${(p) => (p.$w ? css`width: ${p.$w}px; flex: none;` : css`flex: 1;`)}
  height: 52px;
  padding: ${(p) => (p.$raised ? '0 0 13px 3px' : '0 0 0 2px')};
  border: 2px solid #ccc9c6;
  background: #f2f1f0;
  box-shadow: inset 2px 2px 0 #fbfbfa;
  line-height: 46px;
  white-space: pre;
  letter-spacing: ${(p) => (p.$raised ? 0.3 : 0.6)}px;
`;

const ResetCell = styled(StatusCell)`
  padding-left: 4px;
`;

const ResetButton = styled(PushButton)`
  flex: none;
  width: 97px;
  height: 47px;
  line-height: 42px;
  letter-spacing: 1.4px;
`;

/* ------------------------------------------------------------------ */

export default function App() {
  return (
    <Screen>
      <GlobalStyle />
      <TopPanel>
        <WindowTitle>single.rviz* - RViz</WindowTitle>
        <Indicators>
          <KeyboardIcon />
          <Spacer $w={24} />
          <NetworkIcon />
          <Spacer $w={24} />
          <BatteryIcon />
          <Spacer $w={20} />
          <VolumeIcon />
          <Clock>17:15</Clock>
          <Spacer $w={20} />
          <SessionIcon />
          <Spacer $w={12} />
        </Indicators>
      </TopPanel>

      <Body>
        <Launcher>
          {launcherItems.map(({ tone, art: Art, pip, active, last }, i) => (
            <LauncherItem key={i} $last={last}>
              <Pip $kind={pip} />
              <Tile $tone={tone}>
                <Art />
              </Tile>
              <Pip $kind={active ? 'active' : undefined} />
            </LauncherItem>
          ))}
        </Launcher>

        <Main>
          <ToolBar>
            <Grip />
            <ToolButton $width={162} $active>
              <HandIcon />
              <Spacer $w={6} />
              <Text $ls={-0.3}>Interact</Text>
            </ToolButton>
            <Spacer $w={11} />
            <ToolButton $width={219}>
              <NavGoalIcon />
              <Spacer $w={5} />
              <Text $ls={-0.5}>2D Nav Goal</Text>
            </ToolButton>
            <ToolButton $width={223}>
              <PinIcon />
              <Spacer $w={13} />
              <Text $ls={-0.33}>Publish Point</Text>
            </ToolButton>
            <PlusIcon />
            <Spacer $w={62} />
            <MinusIcon />
            <Spacer $w={12} />
            <DropIcon />
          </ToolBar>

          <Workspace>
            <DisplaysPanel>
              <PanelHeader>
                <MonitorIcon />
                <PanelTitle>Displays</PanelTitle>
                <CloseButton />
              </PanelHeader>
              <Tree>
                {rows.map(({ name, icon: Icon, state, check, ls }, i) => (
                  <TreeRow key={i}>
                    <ExpandIcon />
                    <Icon />
                    <RowName $state={state} $ls={ls}>{name}</RowName>
                    {check !== undefined && <TreeCheck checked={check} />}
                  </TreeRow>
                ))}
              </Tree>
              <SplitHandle>
                <SplitTick />
                <SplitTick />
                <SplitTick />
              </SplitHandle>
              <Description />
              <ButtonRow>
                <PushButton>Add</PushButton>
                <PushButton disabled>Duplicate</PushButton>
                <PushButton disabled>Remove</PushButton>
                <PushButton disabled>Rename</PushButton>
              </ButtonRow>
            </DisplaysPanel>
            <Splitter>
              <CollapseArrow />
            </Splitter>
            <RenderView />
            <RightDock>
              <DockBar>
                <CollapseArrow />
              </DockBar>
            </RightDock>
          </Workspace>

          <PanelHeader>
            <ClockIcon />
            <PanelTitle>Time</PanelTitle>
            <CloseButton />
          </PanelHeader>
          <TimeRow>
            <Field>
              <FieldLabel $w={154} $ls={0.65}>ROS Time:</FieldLabel>
              <FieldBox>2426.85</FieldBox>
            </Field>
            <Field>
              <FieldLabel $w={194} $ls={0.75}>ROS Elapsed:</FieldLabel>
              <FieldBox>50.77</FieldBox>
            </Field>
            <Field>
              <FieldLabel $w={156} $ls={0.6}>Wall Time:</FieldLabel>
              <FieldBox>1516180510.25</FieldBox>
            </Field>
            <Field>
              <FieldLabel $w={195} $ls={0.5}>Wall Elapsed:</FieldLabel>
              <FieldBox>54.10</FieldBox>
            </Field>
            <Experimental>
              <CheckBox />
              <Text $ls={0.75}>Experimental</Text>
            </Experimental>
          </TimeRow>
          <StatusBar>
            <ResetCell $w={109}>
              <ResetButton>Reset</ResetButton>
            </ResetCell>
            <StatusCell>
              <b>Left-Click:</b> Move X/Y. <b>Right-Click:</b>: Move Z. <b>Mouse Wheel:</b>: Zoom.
            </StatusCell>
            <StatusCell $w={91} $raised>15 fps</StatusCell>
          </StatusBar>
        </Main>
      </Body>
    </Screen>
  );
}
